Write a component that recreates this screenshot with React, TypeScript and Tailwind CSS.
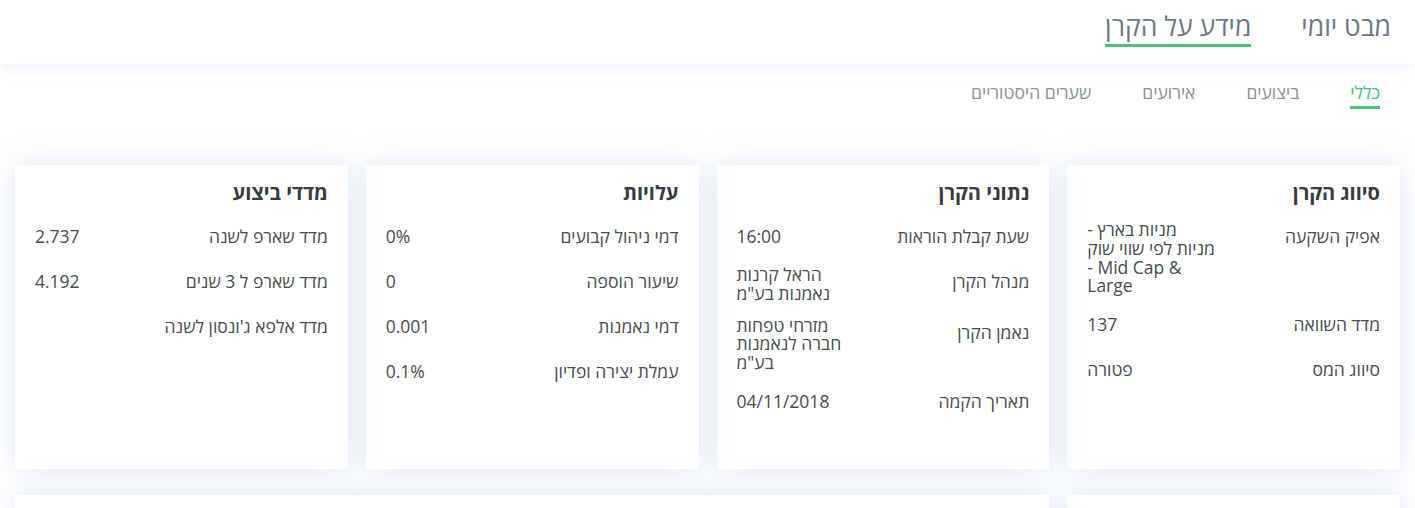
import React from "react";

type Row = { label: string; value: React.ReactNode[] };
type Card = { title: string; rows: Row[] };

const L = (t: string, dir: "ltr" | "rtl" = "ltr") => (
  <div dir={dir} className="text-left whitespace-nowrap">
    {t}
  </div>
);

const cards: Card[] = [
  {
    title: "סיווג הקרן",
    rows: [
      {
        label: "אפיק השקעה",
        value: [L("מניות בארץ -", "rtl"), L("מניות לפי שווי שוק"), L("- Mid Cap &"), L("Large")],
      },
      { label: "מדד השוואה", value: [L("137")] },
      { label: "סיווג המס", value: [L("פטורה")] },
    ],
  },
  {
    title: "נתוני הקרן",
    rows: [
      { label: "שעת קבלת הוראות", value: [L("16:00")] },
      { label: "מנהל הקרן", value: [L("הראל קרנות"), L('נאמנות בע"מ')] },
      { label: "נאמן הקרן", value: [L("מזרחי טפחות"), L("חברה לנאמנות"), L('בע"מ')] },
      { label: "תאריך הקמה", value: [L("04/11/2018")] },
    ],
  },
  {
    title: "עלויות",
    rows: [
      { label: "דמי ניהול קבועים", value: [L("0%")] },
      { label: "שיעור הוספה", value: [L("0")] },
      { label: "דמי נאמנות", value: [L("0.001")] },
      { label: "עמלת יצירה ופדיון", value: [L("0.1%")] },
    ],
  },
  {
    title: "מדדי ביצוע",
    rows: [
      { label: "מדד שארפ לשנה", value: [L("2.737")] },
      { label: "מדד שארפ ל 3 שנים", value: [L("4.192")] },
      { label: "מדד אלפא ג'ונסון לשנה", value: [] },
    ],
  },
];

const topTabs = [
  { t: "מבט יומי", active: false },
  { t: "מידע על הקרן", active: true },
];
const subTabs = [
  { t: "כללי", active: true },
  { t: "ביצועים", active: false },
  { t: "אירועים", active: false },
  { t: "שערים היסטוריים", active: false },
];

export default function App() {
  return (
    <div
      dir="rtl"
      className="w-[1415px] h-[508px] overflow-hidden bg-white"
      style={{ fontFamily: '"Open Sans", "Liberation Sans", sans-serif' }}
    >
      <header className="relative z-10 h-16 bg-white shadow-[0_2px_14px_rgba(190,205,222,0.35)] flex items-start pt-[10px] pr-6 gap-[50px]">
        {topTabs.map((x) => (
          <div
            key={x.t}
            className={`text-[26.5px] leading-[32px] pb-[2px] border-b-[3px] text-[#6b7886] ${
              x.active ? "border-[#4cc27a]" : "border-transparent"
            }`}
          >
            {x.t}
          </div>
        ))}
      </header>

      <nav className="flex items-start pt-4 pr-[35px] gap-[51px]">
        {subTabs.map((x) => (
          <div
            key={x.t}
            className={`text-[17.5px] leading-6 pb-[2px] border-b-[3px] ${
              x.active
                ? "text-[#3cbf74] border-[#4cc27a]"
                : "text-[#8a8f96] border-transparent"
            }`}
          >
            {x.t}
          </div>
        ))}
      </nav>

      <div className="mt-[56px] px-[15px] grid grid-cols-4 gap-x-[18px] gap-y-[26px]">
        {cards.map((c) => (
          <div
            key={c.title}
            className="bg-white h-[304px] px-5 pt-4 shadow-[0_0_28px_rgba(176,198,222,0.4)]"
          >
            <div className="text-[20px] leading-6 font-bold text-[#353b41] mb-[15px]">
              {c.title}
            </div>
            <div className="flex flex-col gap-[13px]">
              {c.rows.map((r) => (
                <div key={r.label} className="flex justify-between items-start">
                  <div className="shrink-0 whitespace-nowrap text-[17.5px] leading-[32px] text-[#474c52]">
                    {r.label}
                  </div>
                  <div className="w-[130px] min-h-[32px] flex flex-col justify-center text-[17.5px] leading-[18.8px] text-[#474c52]">
                    {r.value.map((v, i) => (
                      <React.Fragment key={i}>{v}</React.Fragment>
                    ))}
                  </div>
                </div>
              ))}
            </div>
          </div>
        ))}
        <div className="bg-white h-[200px] shadow-[0_0_28px_rgba(176,198,222,0.4)]" />
        <div className="col-span-3 bg-white h-[200px] shadow-[0_0_28px_rgba(176,198,222,0.4)]" />
      </div>
    </div>
  );
}
